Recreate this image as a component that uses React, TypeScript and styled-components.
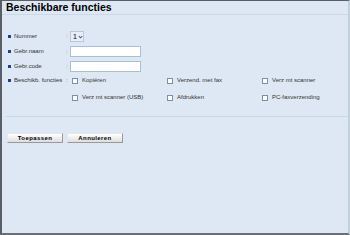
import styled, { createGlobalStyle } from "styled-components";

const GlobalStyle = createGlobalStyle`
  body {
    margin: 0;
    background: #dde8f4;
    font-family: "Liberation Sans", Arial, sans-serif;
  }
`;

const functies = [
  "Kopiëren",
  "Verzend. met fax",
  "Verz mt scanner",
  "Verz mt scanner (USB)",
  "Afdrukken",
  "PC-faxverzending",
];

const App = () => {
  return (
    <Frame>
      <GlobalStyle />
      <Header>
        <h1>Beschikbare functies</h1>
      </Header>
      <Form>
        <Row>
          <Label>Nummer</Label>
          <Colon>:</Colon>
          <Select>
            <span>1</span>
            <svg width="6" height="6" viewBox="0 0 6 6">
              <path d="M1 2 L3 4 L5 2" stroke="#3b5fa8" strokeWidth="1.2" fill="none" />
            </svg>
          </Select>
        </Row>
        <Row>
          <Label>Gebr.naam</Label>
          <Colon>:</Colon>
          <TextInput />
        </Row>
        <Row>
          <Label>Gebr.code</Label>
          <Colon>:</Colon>
          <TextInput />
        </Row>
        <Row $top>
          <Label>Beschikb. functies</Label>
          <Colon>:</Colon>
          <CheckGrid>
            {functies.map((f) => (
              <CheckItem key={f}>
                <Box />
                <span>{f}</span>
              </CheckItem>
            ))}
          </CheckGrid>
        </Row>
      </Form>
      <Divider />
      <Buttons>
        <Button>Toepassen</Button>
        <Button>Annuleren</Button>
      </Buttons>
    </Frame>
  );
};

const Frame = styled.div`
  width: 350px;
  height: 235px;
  box-sizing: border-box;
  border-top: 1px solid #5a5e66;
  border-left: 2px solid #5a5e66;
  border-bottom: 2px solid #6a6e76;
  border-right: 2px solid #c2cfdd;
  background: #dde8f4;
  display: flex;
  flex-direction: column;
`;

const Header = styled.div`
  height: 13px;
  border-bottom: 1px solid #cbd8e6;
  padding-left: 4px;

  h1 {
    margin: 0;
    font-size: 10.5px;
    line-height: 12px;
    font-weight: 700;
    color: #000;
  }
`;

const Form = styled.div`
  display: flex;
  flex-direction: column;
  gap: 4px;
  padding: 16px 0 0 6px;
`;

const Row = styled.div<{ $top?: boolean }>`
  display: flex;
  align-items: ${(p) => (p.$top ? "flex-start" : "center")};
  height: ${(p) => (p.$top ? "auto" : "11px")};
`;

const Label = styled.div`
  width: 58px;
  display: flex;
  align-items: center;
  gap: 3px;
  font-size: 6px;
  color: #333;
  line-height: 9px;

  &::before {
    content: "";
    width: 3px;
    height: 3px;
    background: #1f3f8f;
  }
`;

const Colon = styled.span`
  font-size: 6px;
  color: #666;
  width: 4px;
  line-height: 9px;
`;

const Select = styled.div`
  width: 14px;
  height: 11px;
  box-sizing: border-box;
  border: 1px solid #b8c8dc;
  background: #e9eef6;
  display: flex;
  align-items: center;
  gap: 1px;
  padding-left: 2px;
  font-size: 7px;
  color: #000;
`;

const TextInput = styled.input`
  width: 71px;
  height: 11px;
  box-sizing: border-box;
  border: 1px solid #a9bfd6;
  background: #fff;
  padding: 0;
  margin: 0;
`;

const CheckGrid = styled.div`
  display: grid;
  grid-template-columns: 95px 95px 80px;
  row-gap: 8px;
  padding-left: 2px;
`;

const CheckItem = styled.label`
  display: flex;
  align-items: center;
  gap: 4px;
  font-size: 6px;
  color: #333;
  line-height: 9px;
`;

const Box = styled.span`
  width: 4px;
  height: 4px;
  border: 1px solid #7d8ea6;
  background: #fff;
`;

const Divider = styled.div`
  margin: 14px 0 0 4px;
  border-top: 1px solid #cad7e5;
`;

const Buttons = styled.div`
  display: flex;
  gap: 4px;
  padding: 16px 0 0 5px;
`;

const Button = styled.button`
  width: 56px;
  height: 10px;
  padding: 0;
  box-sizing: border-box;
  border: 1px solid #9a9a9a;
  border-top-color: #e6e6e6;
  border-left-color: #e6e6e6;
  background: linear-gradient(#ffffff, #dedede);
  font-family: "Liberation Sans", Arial, sans-serif;
  font-size: 6px;
  font-weight: 700;
  letter-spacing: 0.4px;
  color: #000;
  line-height: 8px;
`;

export default App;
